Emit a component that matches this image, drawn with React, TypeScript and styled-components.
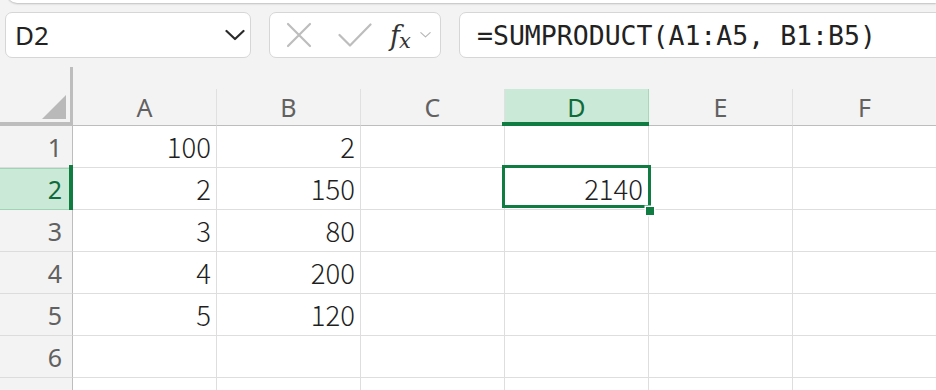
import React from "react";
import styled, { createGlobalStyle, css } from "styled-components";

const Global = createGlobalStyle`
  html, body { margin: 0; padding: 0; background: #f3f3f3; overflow: hidden; }
  * { box-sizing: border-box; }
`;

const Page = styled.div`
  width: 936px;
  height: 390px;
  overflow: hidden;
  display: flex;
  flex-direction: column;
  background: #f3f3f3;
  & > * { flex-shrink: 0; }
`;

const TopEdge = styled.div`
  height: 10px;
  margin-top: -7px;
  margin-left: 7px;
  background: #ffffff;
  border-radius: 0 0 0 10px;
  box-shadow: 0 1px 2px rgba(0, 0, 0, 0.22);
`;

const FormulaBar = styled.div`
  display: flex;
  align-items: stretch;
  gap: 18px;
  height: 46px;
  margin-top: 9px;
  padding-left: 5px;
  margin-right: -12px;
`;

const Field = styled.div`
  background: #ffffff;
  border: 1px solid #d6d6d6;
  border-radius: 7px;
  display: flex;
  align-items: center;
  flex-shrink: 0;
`;

const NameBox = styled(Field)`
  width: 246px;
  padding: 0 5px 0 9px;
  justify-content: space-between;
  font-family: "Noto Sans", "Open Sans", sans-serif;
  font-size: 26px;
  color: #222222;
`;

const FnBox = styled(Field)`
  width: 172px;
  padding-left: 15px;
`;

const FormulaBox = styled(Field)`
  flex: 1;
  padding-left: 17px;
  font-family: "DejaVu Sans Mono", "Liberation Mono", monospace;
  font-size: 26.5px;
  color: #222222;
  white-space: nowrap;
`;

const IconSlot = styled.span<{ $w: number; $ml?: number }>`
  display: inline-flex;
  width: ${(p) => p.$w}px;
  margin-left: ${(p) => p.$ml ?? 0}px;
  align-items: center;
  justify-content: center;
`;

const Fx = styled.span`
  font-family: "DejaVu Serif", "Liberation Serif", serif;
  font-style: italic;
  color: #333333;
  display: inline-flex;
  align-items: flex-end;
  margin-left: 18px;
  line-height: 1;
  .f { font-size: 27px; }
  .x { font-size: 21px; margin-left: -1px; transform: translateY(3px); }
`;

const Sheet = styled.div`
  margin-top: 9px;
  display: grid;
  grid-template-columns: 73px repeat(6, 144px);
  grid-template-rows: 59px repeat(7, 42px);
`;

const Corner = styled.div`
  position: relative;
  background: #f3f3f3;
  border-right: 3px solid #bdbdbd;
  border-bottom: 4px solid #bdbdbd;
  &::after {
    content: "";
    position: absolute;
    right: 4px;
    bottom: 3px;
    width: 24px;
    height: 24px;
    background: #b9b9b9;
    clip-path: polygon(100% 0, 100% 100%, 0 100%);
  }
`;

const ColHeader = styled.div<{ $sel?: boolean }>`
  position: relative;
  align-self: end;
  height: 37px;
  display: flex;
  align-items: center;
  justify-content: center;
  background: #f3f3f3;
  border-right: 1px solid #e0e0e0;
  border-bottom: 1px solid #bdbdbd;
  font-family: "Noto Sans", "Open Sans", sans-serif;
  font-size: 25px;
  color: #616161;
  ${(p) =>
    p.$sel &&
    css`
      background: #cae9d6;
      color: #0f6b3a;
      border-right-color: #a6d9ba;
      &::after {
        content: "";
        position: absolute;
        left: -3px;
        right: -3px;
        bottom: -1px;
        height: 4px;
        background: #107c41;
      }
    `}
`;

const RowHeader = styled.div<{ $sel?: boolean }>`
  position: relative;
  display: flex;
  align-items: center;
  justify-content: flex-end;
  padding-right: 10px;
  background: #f3f3f3;
  border-right: 1px solid #bdbdbd;
  border-bottom: 1px solid #dcdcdc;
  font-family: "Noto Sans", "Open Sans", sans-serif;
  font-size: 25px;
  color: #616161;
  ${(p) =>
    p.$sel &&
    css`
      background: #cae9d6;
      color: #0f6b3a;
      border-bottom-color: #9fd5b5;
      box-shadow: inset 0 1px 0 #9fd5b5;
      &::after {
        content: "";
        position: absolute;
        right: -1px;
        width: 4px;
        top: -3px;
        bottom: -2px;
        background: #107c41;
      }
    `}
`;

const Cell = styled.div<{ $sel?: boolean }>`
  position: relative;
  display: flex;
  align-items: center;
  justify-content: flex-end;
  padding-right: 5px;
  padding-bottom: 1px;
  background: #ffffff;
  border-right: 1px solid #dedede;
  border-bottom: 1px solid #dedede;
  font-family: "Noto Sans CJK JP", "Noto Sans", sans-serif;
  font-weight: 300;
  font-size: 27.5px;
  color: #1f1f1f;
  ${(p) =>
    p.$sel &&
    css`
      z-index: 2;
      &::before {
        content: "";
        position: absolute;
        left: -3px;
        right: -3px;
        top: -3px;
        bottom: 1px;
        border: 3px solid #107c41;
        pointer-events: none;
      }
      &::after {
        content: "";
        position: absolute;
        left: 141px;
        top: 39px;
        width: 8px;
        height: 8px;
        background: #107c41;
        box-shadow: 0 0 0 1.5px #ffffff;
      }
    `}
`;

const cols = ["A", "B", "C", "D", "E", "F"];
const data: Record<number, (string | number)[]> = {
  1: [100, 2, "", "", "", ""],
  2: [2, 150, "", 2140, "", ""],
  3: [3, 80, "", "", "", ""],
  4: [4, 200, "", "", "", ""],
  5: [5, 120, "", "", "", ""],
  6: ["", "", "", "", "", ""],
  7: ["", "", "", "", "", ""],
};

const ChevronDown = ({ size, color, sw }: { size: number; color: string; sw: number }) => (
  <svg width={size} height={size / 2 + 2} viewBox="0 0 20 11" fill="none">
    <path d="M1.5 1.5 L10 9.5 L18.5 1.5" stroke={color} strokeWidth={sw} strokeLinecap="round" strokeLinejoin="round" />
  </svg>
);

export default function App() {
  return (
    <Page>
      <Global />
      <TopEdge />
      <FormulaBar>
        <NameBox>
          <span>D2</span>
          <ChevronDown size={20} color="#2a2a2a" sw={2.2} />
        </NameBox>
        <FnBox>
          <IconSlot $w={27}>
            <svg width="26" height="26" viewBox="0 0 26 26" fill="none">
              <path d="M2 2 L24 24 M24 2 L2 24" stroke="#bdbdbd" strokeWidth="2.2" strokeLinecap="round" />
            </svg>
          </IconSlot>
          <IconSlot $w={34} $ml={26}>
            <svg width="34" height="24" viewBox="0 0 34 24" fill="none">
              <path d="M1.5 12 L12 22.5 L32.5 1.5" stroke="#bdbdbd" strokeWidth="2.2" strokeLinecap="round" strokeLinejoin="round" />
            </svg>
          </IconSlot>
          <Fx>
            <span className="f">f</span>
            <span className="x">x</span>
          </Fx>
          <IconSlot $w={12} $ml={9}>
            <ChevronDown size={11} color="#b5b5b5" sw={2} />
          </IconSlot>
        </FnBox>
        <FormulaBox>=SUMPRODUCT(A1:A5, B1:B5)</FormulaBox>
      </FormulaBar>
      <Sheet>
        <Corner />
        {cols.map((c) => (
          <ColHeader key={c} $sel={c === "D"}>
            {c}
          </ColHeader>
        ))}
        {Object.keys(data).map((r) => {
          const row = Number(r);
          return (
            <React.Fragment key={r}>
              <RowHeader $sel={row === 2}>{row <= 6 ? row : ""}</RowHeader>
              {data[row].map((v, i) => (
                <Cell key={i} $sel={row === 2 && i === 3}>
                  {v}
                </Cell>
              ))}
            </React.Fragment>
          );
        })}
      </Sheet>
    </Page>
  );
}
